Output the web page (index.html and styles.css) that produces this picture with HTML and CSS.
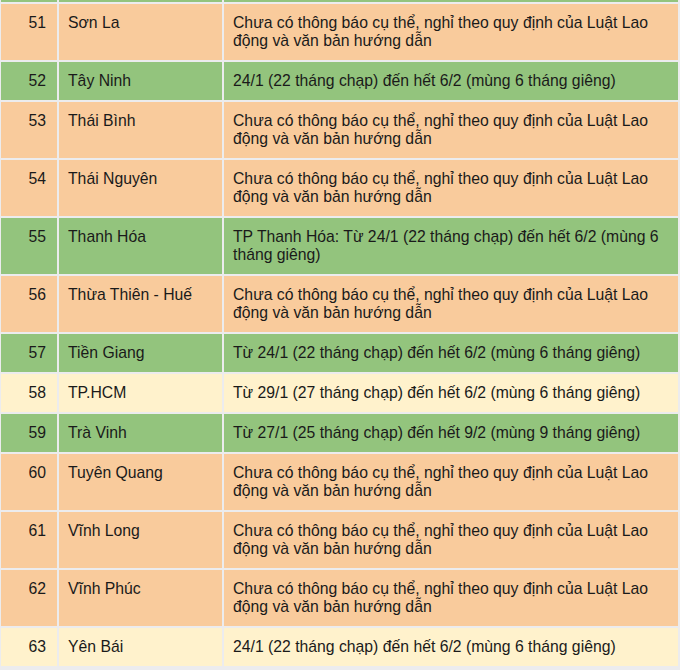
FILE: index.html
```html
<!DOCTYPE html>
<html lang="vi">
<head>
<meta charset="utf-8">
<link rel="stylesheet" href="styles.css">
</head>
<body>
<table class="grid">
  <colgroup><col class="c-num"><col class="c-name"><col class="c-text"></colgroup>
  <tr class="stub green"><td></td><td></td><td></td></tr>
  <tr class="orange"><td class="num">51</td><td>Sơn La</td><td>Chưa có thông báo cụ thể, nghỉ theo quy định của Luật Lao động và văn bản hướng dẫn</td></tr>
  <tr class="green"><td class="num">52</td><td>Tây Ninh</td><td>24/1 (22 tháng chạp) đến hết 6/2 (mùng 6 tháng giêng)</td></tr>
  <tr class="orange"><td class="num">53</td><td>Thái Bình</td><td>Chưa có thông báo cụ thể, nghỉ theo quy định của Luật Lao động và văn bản hướng dẫn</td></tr>
  <tr class="orange"><td class="num">54</td><td>Thái Nguyên</td><td>Chưa có thông báo cụ thể, nghỉ theo quy định của Luật Lao động và văn bản hướng dẫn</td></tr>
  <tr class="green"><td class="num">55</td><td>Thanh Hóa</td><td>TP Thanh Hóa: Từ 24/1 (22 tháng chạp) đến hết 6/2 (mùng 6 tháng giêng)</td></tr>
  <tr class="orange"><td class="num">56</td><td>Thừa Thiên - Huế</td><td>Chưa có thông báo cụ thể, nghỉ theo quy định của Luật Lao động và văn bản hướng dẫn</td></tr>
  <tr class="green"><td class="num">57</td><td>Tiền Giang</td><td>Từ 24/1 (22 tháng chạp) đến hết 6/2 (mùng 6 tháng giêng)</td></tr>
  <tr class="yellow"><td class="num">58</td><td>TP.HCM</td><td>Từ 29/1 (27 tháng chạp) đến hết 6/2 (mùng 6 tháng giêng)</td></tr>
  <tr class="green"><td class="num">59</td><td>Trà Vinh</td><td>Từ 27/1 (25 tháng chạp) đến hết 9/2 (mùng 9 tháng giêng)</td></tr>
  <tr class="orange"><td class="num">60</td><td>Tuyên Quang</td><td>Chưa có thông báo cụ thể, nghỉ theo quy định của Luật Lao động và văn bản hướng dẫn</td></tr>
  <tr class="orange"><td class="num">61</td><td>Vĩnh Long</td><td>Chưa có thông báo cụ thể, nghỉ theo quy định của Luật Lao động và văn bản hướng dẫn</td></tr>
  <tr class="orange"><td class="num">62</td><td>Vĩnh Phúc</td><td>Chưa có thông báo cụ thể, nghỉ theo quy định của Luật Lao động và văn bản hướng dẫn</td></tr>
  <tr class="yellow"><td class="num">63</td><td>Yên Bái</td><td>24/1 (22 tháng chạp) đến hết 6/2 (mùng 6 tháng giêng)</td></tr>
</table>
</body>
</html>
```

FILE: styles.css
```css
html, body {
  margin: 0;
  padding: 0;
  background: #ececee;
}
body {
  width: 680px;
  height: 670px;
  overflow: hidden;
}
.grid {
  border-collapse: separate;
  border-spacing: 2px;
  background: #ececee;
  margin: -2px 0 0 -1px;
  table-layout: fixed;
  width: 681px;
  font-family: "Liberation Sans", Arial, sans-serif;
  font-size: 15.75px;
  line-height: 18px;
  color: #1a1a1a;
}
.c-num { width: 56px; }
.c-name { width: 163px; }
.c-text { width: auto; }
.grid td {
  padding: 10px 10px 10px 9px;
  vertical-align: top;
}
.grid td.num {
  text-align: right;
  padding-right: 11px;
}
.grid .stub td {
  padding: 0;
  height: 2px;
}
.orange td { background: #f9cb9c; }
.green td { background: #93c47d; }
.yellow td { background: #fff2cc; }
```
